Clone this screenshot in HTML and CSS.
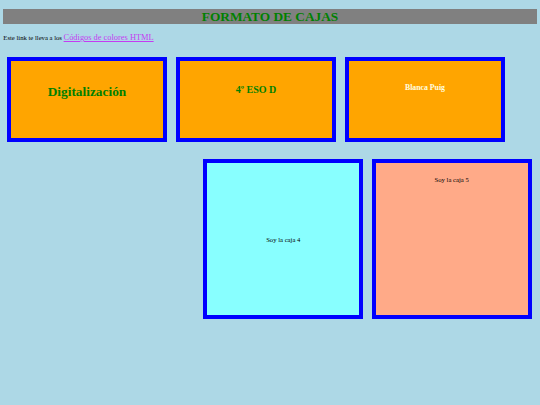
FILE: index.html
```html
<!DOCTYPE html>
<html lang="es">
<head>
<meta charset="utf-8">
<title>Formato de cajas</title>
<link rel="stylesheet" href="styles.css">
</head>
<body>
<h1 class="title">FORMATO DE CAJAS</h1>
<p class="intro">Este link te lleva a los <a class="link" href="#">Códigos de colores HTML</a></p>
<div class="row row-top">
  <div class="box box-orange"><h1 class="h-big">Digitalización</h1></div>
  <div class="box box-orange"><h2 class="h-mid">4º ESO D</h2></div>
  <div class="box box-orange"><h3 class="h-small">Blanca Puig</h3></div>
</div>
<div class="row row-bottom">
  <div class="box box-square box-cyan"><p class="caja">Soy la caja 4</p></div>
  <div class="box box-square box-salmon"><p class="caja caja-top">Soy la caja 5</p></div>
</div>
</body>
</html>
```
FILE: styles.css
```css
html {
  background: #add8e6;
}
body {
  margin: 0 3.33px;
  padding-top: 0.1px;
  background: #add8e6;
  font-family: "Liberation Serif", "Times New Roman", serif;
  color: #000;
}
.title {
  margin: 8.9px 0 0;
  background: #808080;
  color: #008000;
  font-size: 13.33px;
  line-height: 15.3px;
  font-weight: bold;
  text-align: center;
}
.intro {
  margin: 8.9px 0 0;
  font-size: 6.67px;
  line-height: 9.6px;
}
.link {
  color: #c43cf2;
  font-size: 8.4px;
  text-decoration: underline;
}
.row {
  display: flex;
}
.row-top {
  margin-top: 14.7px;
  padding-left: 3.67px;
  gap: 9px;
}
.row-bottom {
  margin-top: 17.5px;
  justify-content: flex-end;
  padding-right: 5px;
  gap: 8.4px;
}
.box {
  box-sizing: border-box;
  width: 160px;
  border: 4px solid #0000ff;
  text-align: center;
}
.box-orange {
  height: 84.5px;
  background: #ffa500;
  padding-top: 14px;
}
.h-big {
  margin: 8.9px 0 0;
  font-size: 13.33px;
  line-height: 15.3px;
  color: #008000;
}
.h-mid {
  margin: 8.3px 0 0;
  font-size: 10px;
  line-height: 11.5px;
  color: #008000;
}
.h-small {
  margin: 7.8px 0 0;
  font-size: 7.8px;
  line-height: 9px;
  color: #ffffe0;
}
.box-square {
  height: 160px;
}
.box-cyan {
  background: #88ffff;
  display: flex;
  align-items: center;
  justify-content: center;
}
.box-salmon {
  background: #ffaa88;
  padding-top: 13px;
}
.caja {
  margin: 0;
  font-size: 6.67px;
  line-height: 7.7px;
}
```
